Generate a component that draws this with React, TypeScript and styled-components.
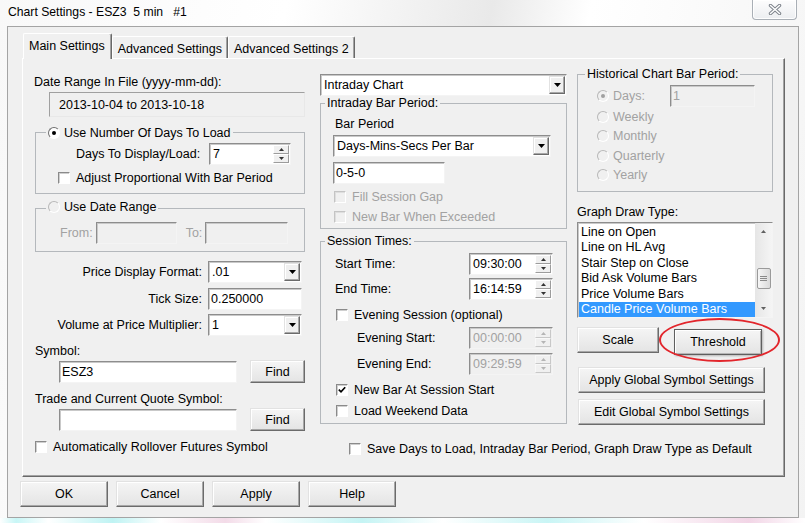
import React from "react";
import styled, { createGlobalStyle, css } from "styled-components";

const FONT = `"Liberation Sans", Arial, Helvetica, sans-serif`;

const GlobalStyle = createGlobalStyle`
  html, body { margin: 0; padding: 0; background: #ffffff; }
  body { width: 805px; height: 523px; overflow: hidden; }
  #root { width: 805px; height: 523px; }
  *, *::before, *::after { box-sizing: border-box; }
`;

const sunken = css`
  border-style: solid;
  border-width: 1px;
  border-color: #8d8d8d #f4f4f4 #f4f4f4 #8d8d8d;
  box-shadow: inset 1px 1px 0 #c9c9c9;
`;

const raised = css`
  border-style: solid;
  border-width: 1px;
  border-color: #e2e2e2 #6b6b6b #6b6b6b #e2e2e2;
  box-shadow: inset -1px -1px 0 #a7a7a7, inset 1px 1px 0 #ffffff;
`;

const Window = styled.div`
  width: 805px;
  height: 523px;
  display: flex;
  flex-direction: column;
  background: linear-gradient(100deg, #f8f8f8 0%, #ffffff 32%, #e9e9e9 55%, #ffffff 66%, #f3f3f3 100%);
  font-family: ${FONT};
  font-size: 12.5px;
  color: #000;
`;

const TitleBar = styled.div`
  height: 26px;
  flex: none;
  display: flex;
  align-items: flex-start;
  justify-content: space-between;
  padding: 0 8px 0 8px;
`;

const Title = styled.div`
  margin-top: 5px;
  font-size: 12.2px;
  line-height: 15px;
  white-space: pre;
`;

const CloseButton = styled.div`
  width: 45px;
  height: 20px;
  border: 1px solid #a9afb6;
  border-top: none;
  border-radius: 0 0 4px 4px;
  background: linear-gradient(#fdfdfd, #eceef1);
  box-shadow: inset 0 0 0 1px rgba(255, 255, 255, 0.9);
  display: flex;
  align-items: center;
  justify-content: center;
  padding-bottom: 1px;
`;

const Dialog = styled.div`
  flex: none;
  margin: 0 6px 0 7px;
  height: 492px;
  border: 1px solid #a4a4a4;
  background: #f0f0f0;
  padding: 6px 0 0 14px;
  display: flex;
  flex-direction: column;
`;

const BottomGlow = styled.div`
  flex: 1;
  background: linear-gradient(
    90deg,
    #ffffff 0%,
    #c8f6f6 2%,
    #ffffff 6%,
    #bff3f3 14%,
    #ffffff 20%,
    #f3dbe8 28%,
    #ffffff 33%,
    #c5f4f4 45%,
    #ffffff 55%,
    #c9f5f5 68%,
    #ffffff 80%,
    #f2d5e6 93%,
    #ffffff 100%
  );
`;

const TabStrip = styled.div`
  height: 25px;
  display: flex;
  align-items: flex-end;
  padding-left: 1px;
  position: relative;
  z-index: 1;
`;

const Tab = styled.div<{ $active?: boolean }>`
  display: flex;
  align-items: center;
  white-space: nowrap;
  background: #f0f0f0;
  border-top: 1px solid #ffffff;
  border-left: 1px solid #ffffff;
  border-right: 1px solid #696969;
  box-shadow: inset -1px 0 0 #a3a3a3;
  border-radius: 2px 2px 0 0;
  ${(p) =>
    p.$active
      ? css`
          height: 26px;
          margin-bottom: -1px;
          padding: 0 6px 1px 5px;
        `
      : css`
          height: 22px;
          padding: 2px 5px 0 5px;
        `}
`;

const Panel = styled.div`
  width: 763px;
  height: 419px;
  border-top: 1px solid #ffffff;
  border-left: 1px solid #ffffff;
  border-right: 1px solid #696969;
  border-bottom: 1px solid #696969;
  box-shadow: inset -1px -1px 0 #a3a3a3;
  padding: 15px 0 0 11px;
  display: flex;
  flex-direction: column;
`;

const Columns = styled.div`
  display: flex;
  height: 360px;
`;

const LeftCol = styled.div`
  width: 271px;
  display: flex;
  flex-direction: column;
`;

const MidCol = styled.div`
  width: 247px;
  margin-left: 15px;
  display: flex;
  flex-direction: column;
`;

const RightCol = styled.div`
  width: 196px;
  margin-left: 10px;
  display: flex;
  flex-direction: column;
`;

const Label = styled.div<{ $mt?: number; $ml?: number; $disabled?: boolean }>`
  line-height: 16px;
  white-space: nowrap;
  margin-top: ${(p) => p.$mt ?? 0}px;
  margin-left: ${(p) => p.$ml ?? 0}px;
  color: ${(p) => (p.$disabled ? "#a2a2a2" : "#000")};
`;

const ReadOnlyField = styled.div`
  margin: 2px 0 0 15px;
  width: 256px;
  height: 25px;
  ${sunken};
  box-shadow: none;
  border-color: #a0a0a0 #e8e8e8 #e8e8e8 #a0a0a0;
  background: #f0f0f0;
  display: flex;
  align-items: center;
  padding-left: 9px;
  white-space: nowrap;
`;

const Group = styled.fieldset<{ $w: number; $mt: number; $ml?: number; $pb: number }>`
  margin: ${(p) => p.$mt}px 0 0 ${(p) => p.$ml ?? 0}px;
  padding: 0 0 ${(p) => p.$pb}px 0;
  width: ${(p) => p.$w}px;
  min-width: 0;
  border: 1px solid #b4b8bc;
  display: flex;
  flex-direction: column;
`;

const Legend = styled.legend<{ $ml: number; $disabled?: boolean }>`
  margin-left: ${(p) => p.$ml}px;
  padding: 0 2px;
  line-height: 15px;
  white-space: nowrap;
  color: ${(p) => (p.$disabled ? "#a2a2a2" : "#000")};
`;

const LegendInner = styled.span`
  display: inline-flex;
  align-items: center;
  gap: 4px;
`;

const FieldRow = styled.div<{ $mt: number; $pl: number; $pr?: number }>`
  display: flex;
  align-items: center;
  margin-top: ${(p) => p.$mt}px;
  padding-left: ${(p) => p.$pl}px;
  padding-right: ${(p) => p.$pr ?? 0}px;
  white-space: nowrap;
`;

const PushRight = styled.div`
  margin-left: auto;
  display: flex;
`;

const CheckLine = styled.div<{ $mt: number; $pl: number; $disabled?: boolean }>`
  display: flex;
  align-items: center;
  gap: 6px;
  height: 16px;
  margin-top: ${(p) => p.$mt}px;
  padding-left: ${(p) => p.$pl}px;
  white-space: nowrap;
  color: ${(p) => (p.$disabled ? "#a2a2a2" : "#000")};
`;

const CheckBoxBox = styled.span<{ $disabled?: boolean }>`
  width: 12px;
  height: 12px;
  flex: none;
  border-style: solid;
  border-width: 1px;
  border-color: ${(p) => (p.$disabled ? "#c4c4c4 #ffffff #ffffff #c4c4c4" : "#8a8a8a #ffffff #ffffff #8a8a8a")};
  box-shadow: inset 1px 1px 0 ${(p) => (p.$disabled ? "#dedede" : "#cfcfcf")};
  background: ${(p) => (p.$disabled ? "#f0f0f0" : "#ffffff")};
  display: flex;
  align-items: center;
  justify-content: center;
`;

const RadioDot = styled.span<{ $checked?: boolean; $disabled?: boolean }>`
  width: 12px;
  height: 12px;
  flex: none;
  border-radius: 50%;
  border: 1px solid;
  border-color: ${(p) => (p.$disabled ? "#b8b8b8 #ffffff #ffffff #b8b8b8" : "#6f6f6f #ffffff #ffffff #6f6f6f")};
  background: ${(p) => (p.$disabled ? "#f0f0f0" : "#ffffff")};
  display: flex;
  align-items: center;
  justify-content: center;
  &::after {
    content: "";
    width: 4px;
    height: 4px;
    border-radius: 50%;
    background: ${(p) => (p.$disabled ? "#a0a0a0" : "#000")};
    display: ${(p) => (p.$checked ? "block" : "none")};
  }
`;

const RadioLine = styled.div<{ $disabled?: boolean; $w?: number }>`
  display: flex;
  align-items: center;
  gap: 4px;
  white-space: nowrap;
  ${(p) => (p.$w ? `width: ${p.$w}px;` : "")}
  color: ${(p) => (p.$disabled ? "#a2a2a2" : "#000")};
`;

const RadioStackItem = styled.div`
  height: 19.5px;
  display: flex;
  align-items: center;
  padding-left: 19px;
`;

const EditBox = styled.div<{ $w: number; $disabled?: boolean; $ml?: number }>`
  width: ${(p) => p.$w}px;
  height: 22px;
  flex: none;
  margin-left: ${(p) => p.$ml ?? 0}px;
  ${sunken};
  background: ${(p) => (p.$disabled ? "#f0f0f0" : "#ffffff")};
  color: ${(p) => (p.$disabled ? "#a2a2a2" : "#000")};
  display: flex;
  align-items: center;
  padding-left: 2px;
  white-space: nowrap;
  overflow: hidden;
`;

const ComboBox = styled.div<{ $w: number; $ml?: number; $mt?: number }>`
  width: ${(p) => p.$w}px;
  height: 22px;
  flex: none;
  margin-left: ${(p) => p.$ml ?? 0}px;
  margin-top: ${(p) => p.$mt ?? 0}px;
  ${sunken};
  background: #ffffff;
  display: flex;
  align-items: stretch;
`;

const ComboText = styled.div`
  flex: 1;
  display: flex;
  align-items: center;
  padding-left: 3px;
  white-space: nowrap;
  overflow: hidden;
`;

const DropButton = styled.div`
  width: 16px;
  margin: 1px 1px 1px 0;
  ${raised};
  background: #f0f0f0;
  display: flex;
  align-items: center;
  justify-content: center;
`;

const SpinBox = styled.div<{ $w: number; $disabled?: boolean }>`
  width: ${(p) => p.$w}px;
  height: 22px;
  flex: none;
  ${sunken};
  background: ${(p) => (p.$disabled ? "#f0f0f0" : "#ffffff")};
  color: ${(p) => (p.$disabled ? "#a2a2a2" : "#000")};
  display: flex;
  align-items: stretch;
`;

const SpinText = styled.div`
  flex: 1;
  display: flex;
  align-items: center;
  padding-left: 3px;
  white-space: nowrap;
`;

const SpinButtons = styled.div`
  width: 17px;
  display: flex;
  flex-direction: column;
  padding: 1px 1px 1px 0;
`;

const SpinButton = styled.div<{ $disabled?: boolean }>`
  flex: 1;
  border: 1px solid;
  border-color: ${(p) => (p.$disabled ? "#f8f8f8 #c8c8c8 #c8c8c8 #f8f8f8" : "#ffffff #9c9c9c #9c9c9c #ffffff")};
  background: #f0f0f0;
  display: flex;
  align-items: center;
  justify-content: center;
`;

const FormRow = styled.div<{ $mt: number }>`
  display: grid;
  grid-template-columns: 168px 94px;
  column-gap: 6px;
  align-items: center;
  height: 22px;
  margin-top: ${(p) => p.$mt}px;
`;

const FormLabel = styled.div`
  text-align: right;
  white-space: nowrap;
`;

const PushButton = styled.button<{ $w: number; $h?: number; $focus?: boolean; $ml?: number; $mt?: number }>`
  width: ${(p) => p.$w}px;
  height: ${(p) => p.$h ?? 26}px;
  flex: none;
  margin: ${(p) => p.$mt ?? 0}px 0 0 ${(p) => p.$ml ?? 0}px;
  padding: 0;
  font-family: ${FONT};
  font-size: 12.5px;
  color: #000;
  background: linear-gradient(#f5f5f5, #e4e4e4);
  ${raised};
  ${(p) =>
    p.$focus
      ? css`
          border-color: #5f5f5f;
          box-shadow: inset 1px 1px 0 #ffffff, inset -1px -1px 0 #b5b5b5, 1px 1px 2px rgba(0, 0, 0, 0.25);
        `
      : ""}
`;

const ButtonPair = styled.div`
  display: flex;
  align-items: flex-start;
  gap: 15px;
  margin-top: 9px;
`;

const HighlightWrap = styled.div`
  position: relative;
  margin-top: 2px;
  display: flex;
`;

const HighlightRing = styled.div`
  position: absolute;
  left: -15px;
  top: -11px;
  width: 121px;
  height: 44px;
  border: 2px solid #e2262c;
  border-radius: 50%;
  pointer-events: none;
`;

const ListBox = styled.div`
  margin-top: 2px;
  width: 196px;
  height: 96px;
  ${sunken};
  background: #ffffff;
  display: flex;
`;

const ListItems = styled.div`
  flex: 1;
  padding: 2px 0 0 1px;
  overflow: hidden;
`;

const ListItem = styled.div<{ $selected?: boolean }>`
  height: 15.4px;
  line-height: 15.4px;
  padding-left: 2px;
  white-space: nowrap;
  background: ${(p) => (p.$selected ? "#3399ff" : "transparent")};
  color: ${(p) => (p.$selected ? "#ffffff" : "#000")};
`;

const ScrollBar = styled.div`
  width: 17px;
  display: flex;
  flex-direction: column;
  background: linear-gradient(90deg, #e6e6e6, #f5f5f5);
`;

const ScrollArrow = styled.div`
  height: 17px;
  display: flex;
  align-items: center;
  justify-content: center;
`;

const ScrollTrack = styled.div`
  flex: 1;
  padding-top: 28px;
  display: flex;
  flex-direction: column;
  align-items: center;
`;

const ScrollThumb = styled.div`
  width: 14px;
  height: 21px;
  border: 1px solid #9a9a9a;
  border-radius: 2px;
  background: linear-gradient(90deg, #f6f6f6, #dadada);
  display: flex;
  align-items: center;
  justify-content: center;
`;

const BottomRow = styled.div`
  display: flex;
  align-items: flex-start;
  margin-top: 5px;
`;

const BottomCell = styled.div<{ $w?: number; $pt?: number }>`
  ${(p) => (p.$w ? `width: ${p.$w}px;` : "")}
  padding-top: ${(p) => p.$pt ?? 0}px;
`;

const ButtonRow = styled.div`
  display: flex;
  gap: 8px;
  margin: 4px 0 0 -2px;
`;

const TriDown = ({ color = "#000" }: { color?: string }) => (
  <svg width="7" height="4" viewBox="0 0 7 4">
    <polygon points="0,0 7,0 3.5,4" fill={color} />
  </svg>
);

const SmallArrow = ({ up, color }: { up?: boolean; color: string }) => (
  <svg width="5" height="3" viewBox="0 0 5 3">
    <polygon points={up ? "0,3 5,3 2.5,0" : "0,0 5,0 2.5,3"} fill={color} />
  </svg>
);

const Check = ({ checked, disabled }: { checked?: boolean; disabled?: boolean }) => (
  <CheckBoxBox $disabled={disabled}>
    {checked && (
      <svg width="8" height="8" viewBox="0 0 8 8">
        <path d="M0.8 3.6 L3 5.8 L7.2 1.2" stroke="#000" strokeWidth="1.7" fill="none" />
      </svg>
    )}
  </CheckBoxBox>
);

const Combo = ({ w, value, ml, mt }: { w: number; value: string; ml?: number; mt?: number }) => (
  <ComboBox $w={w} $ml={ml} $mt={mt}>
    <ComboText>{value}</ComboText>
    <DropButton>
      <TriDown />
    </DropButton>
  </ComboBox>
);

const Spin = ({ w, value, disabled }: { w: number; value: string; disabled?: boolean }) => {
  const c = disabled ? "#b5b5b5" : "#333";
  return (
    <SpinBox $w={w} $disabled={disabled}>
      <SpinText>{value}</SpinText>
      <SpinButtons>
        <SpinButton $disabled={disabled}>
          <SmallArrow up color={c} />
        </SpinButton>
        <SpinButton $disabled={disabled}>
          <SmallArrow color={c} />
        </SpinButton>
      </SpinButtons>
    </SpinBox>
  );
};

const CloseGlyph = () => (
  <svg width="14" height="11" viewBox="0 0 14 11">
    <path d="M2.5 1.5 L11.5 9.5 M11.5 1.5 L2.5 9.5" stroke="#7c828a" strokeWidth="3.4" strokeLinecap="round" />
    <path d="M2.5 1.5 L11.5 9.5 M11.5 1.5 L2.5 9.5" stroke="#ffffff" strokeWidth="1.5" strokeLinecap="round" />
  </svg>
);

const GripLines = () => (
  <svg width="7" height="7" viewBox="0 0 7 7">
    <path d="M0 1.5 H7 M0 3.5 H7 M0 5.5 H7" stroke="#8a8a8a" strokeWidth="1" />
  </svg>
);

const graphTypes = [
  "Line on Open",
  "Line on HL Avg",
  "Stair Step on Close",
  "Bid Ask Volume Bars",
  "Price Volume Bars",
  "Candle Price Volume Bars",
];

const periods = ["Weekly", "Monthly", "Quarterly", "Yearly"];

export default function App() {
  return (
    <>
      <GlobalStyle />
      <Window>
        <TitleBar>
          <Title>{"Chart Settings - ESZ3  5 min   #1"}</Title>
          <CloseButton>
            <CloseGlyph />
          </CloseButton>
        </TitleBar>
        <Dialog>
          <TabStrip>
            <Tab $active>Main Settings</Tab>
            <Tab>Advanced Settings</Tab>
            <Tab>Advanced Settings 2</Tab>
          </TabStrip>
          <Panel>
            <Columns>
              <LeftCol>
                <Label>Date Range In File (yyyy-mm-dd):</Label>
                <ReadOnlyField>2013-10-04 to 2013-10-18</ReadOnlyField>

                <Group $w={270} $mt={7} $ml={1} $pb={7}>
                  <Legend $ml={10}>
                    <LegendInner>
                      <RadioDot $checked />
                      Use Number Of Days To Load
                    </LegendInner>
                  </Legend>
                  <FieldRow $mt={2} $pl={40} $pr={13}>
                    <span>Days To Display/Load:</span>
                    <PushRight>
                      <Spin w={82} value="7" />
                    </PushRight>
                  </FieldRow>
                  <CheckLine $mt={5} $pl={22}>
                    <Check />
                    Adjust Proportional With Bar Period
                  </CheckLine>
                </Group>

                <Group $w={270} $mt={6} $ml={1} $pb={7}>
                  <Legend $ml={10}>
                    <LegendInner>
                      <RadioDot $disabled />
                      Use Date Range
                    </LegendInner>
                  </Legend>
                  <FieldRow $mt={5} $pl={24}>
                    <Label $disabled>From:</Label>
                    <EditBox $w={81} $ml={3} $disabled />
                    <Label $disabled $ml={9}>
                      To:
                    </Label>
                    <EditBox $w={83} $ml={3} $disabled />
                  </FieldRow>
                </Group>

                <FormRow $mt={9}>
                  <FormLabel>Price Display Format:</FormLabel>
                  <Combo w={94} value=".01" />
                </FormRow>
                <FormRow $mt={5}>
                  <FormLabel>Tick Size:</FormLabel>
                  <EditBox $w={94}>0.250000</EditBox>
                </FormRow>
                <FormRow $mt={4}>
                  <FormLabel>Volume at Price Multiplier:</FormLabel>
                  <Combo w={94} value="1" />
                </FormRow>

                <Label $mt={7} $ml={1}>
                  Symbol:
                </Label>
                <FieldRow $mt={1} $pl={25}>
                  <EditBox $w={178}>ESZ3</EditBox>
                  <PushButton $w={55} $h={23} $ml={13}>
                    Find
                  </PushButton>
                </FieldRow>
                <Label $mt={8} $ml={1}>
                  Trade and Current Quote Symbol:
                </Label>
                <FieldRow $mt={1} $pl={25}>
                  <EditBox $w={178} />
                  <PushButton $w={55} $h={23} $ml={13}>
                    Find
                  </PushButton>
                </FieldRow>
              </LeftCol>

              <MidCol>
                <Combo w={247} value="Intraday Chart" />
                <Group $w={247} $mt={0} $pb={3}>
                  <Legend $ml={4}>Intraday Bar Period:</Legend>
                  <Label $mt={5} $ml={14}>
                    Bar Period
                  </Label>
                  <Combo w={218} value="Days-Mins-Secs Per Bar" ml={12} mt={3} />
                  <FieldRow $mt={5} $pl={12}>
                    <EditBox $w={112}>0-5-0</EditBox>
                  </FieldRow>
                  <CheckLine $mt={5} $pl={13} $disabled>
                    <Check disabled />
                    Fill Session Gap
                  </CheckLine>
                  <CheckLine $mt={4} $pl={13} $disabled>
                    <Check disabled />
                    New Bar When Exceeded
                  </CheckLine>
                </Group>

                <Group $w={247} $mt={5} $pb={4}>
                  <Legend $ml={4}>Session Times:</Legend>
                  <FieldRow $mt={4} $pl={14} $pr={13}>
                    <span>Start Time:</span>
                    <PushRight>
                      <Spin w={84} value="09:30:00" />
                    </PushRight>
                  </FieldRow>
                  <FieldRow $mt={3} $pl={14} $pr={13}>
                    <span>End Time:</span>
                    <PushRight>
                      <Spin w={84} value="16:14:59" />
                    </PushRight>
                  </FieldRow>
                  <CheckLine $mt={7} $pl={15}>
                    <Check />
                    Evening Session (optional)
                  </CheckLine>
                  <FieldRow $mt={4} $pl={36} $pr={13}>
                    <span>Evening Start:</span>
                    <PushRight>
                      <Spin w={84} value="00:00:00" disabled />
                    </PushRight>
                  </FieldRow>
                  <FieldRow $mt={4} $pl={36} $pr={13}>
                    <span>Evening End:</span>
                    <PushRight>
                      <Spin w={84} value="09:29:59" disabled />
                    </PushRight>
                  </FieldRow>
                  <CheckLine $mt={7} $pl={15}>
                    <Check checked />
                    New Bar At Session Start
                  </CheckLine>
                  <CheckLine $mt={5} $pl={15}>
                    <Check />
                    Load Weekend Data
                  </CheckLine>
                </Group>
              </MidCol>

              <RightCol>
                <Group $w={196} $mt={-7} $pb={6}>
                  <Legend $ml={7}>Historical Chart Bar Period:</Legend>
                  <FieldRow $mt={3} $pl={19}>
                    <RadioLine $disabled $w={73}>
                      <RadioDot $checked $disabled />
                      Days:
                    </RadioLine>
                    <EditBox $w={85} $disabled>
                      1
                    </EditBox>
                  </FieldRow>
                  {periods.map((p) => (
                    <RadioStackItem key={p}>
                      <RadioLine $disabled>
                        <RadioDot $disabled />
                        {p}
                      </RadioLine>
                    </RadioStackItem>
                  ))}
                </Group>

                <Label $mt={12}>Graph Draw Type:</Label>
                <ListBox>
                  <ListItems>
                    {graphTypes.map((g, i) => (
                      <ListItem key={g} $selected={i === graphTypes.length - 1}>
                        {g}
                      </ListItem>
                    ))}
                  </ListItems>
                  <ScrollBar>
                    <ScrollArrow>
                      <SmallArrow up color="#606060" />
                    </ScrollArrow>
                    <ScrollTrack>
                      <ScrollThumb>
                        <GripLines />
                      </ScrollThumb>
                    </ScrollTrack>
                    <ScrollArrow>
                      <SmallArrow color="#606060" />
                    </ScrollArrow>
                  </ScrollBar>
                </ListBox>

                <ButtonPair>
                  <PushButton $w={82}>Scale</PushButton>
                  <HighlightWrap>
                    <PushButton $w={88} $focus>
                      Threshold
                    </PushButton>
                    <HighlightRing />
                  </HighlightWrap>
                </ButtonPair>
                <PushButton $w={187} $ml={1} $mt={12}>
                  Apply Global Symbol Settings
                </PushButton>
                <PushButton $w={187} $ml={1} $mt={6}>
                  Edit Global Symbol Settings
                </PushButton>
              </RightCol>
            </Columns>

            <BottomRow>
              <BottomCell $w={314}>
                <CheckLine $mt={0} $pl={1}>
                  <Check />
                  Automatically Rollover Futures Symbol
                </CheckLine>
              </BottomCell>
              <BottomCell $pt={2}>
                <CheckLine $mt={0} $pl={1}>
                  <Check />
                  Save Days to Load, Intraday Bar Period, Graph Draw Type as Default
                </CheckLine>
              </BottomCell>
            </BottomRow>
          </Panel>
          <ButtonRow>
            <PushButton $w={88}>OK</PushButton>
            <PushButton $w={88}>Cancel</PushButton>
            <PushButton $w={88}>Apply</PushButton>
            <PushButton $w={88}>Help</PushButton>
          </ButtonRow>
        </Dialog>
        <BottomGlow />
      </Window>
    </>
  );
}
